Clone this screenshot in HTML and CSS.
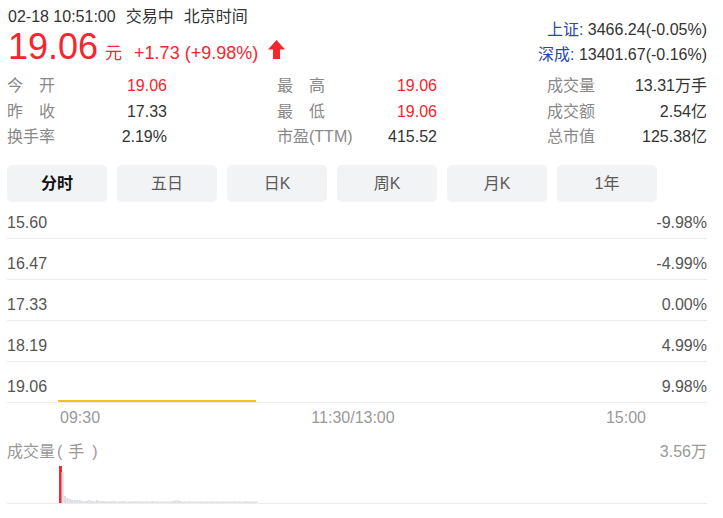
FILE: index.html
```html
<!DOCTYPE html>
<html lang="zh-CN">
<head>
    <meta charset="UTF-8">
    <title>行情</title>
    <link rel="stylesheet" href="styles.css">
</head>
<body>
    <div class="quote">
        <div class="top">
            <div class="main">
                <div class="time">02-18 10:51:00<span class="gap">交易中</span><span class="gap">北京时间</span></div>
                <div class="price-row">
                    <span class="price">19.06</span>
                    <span class="unit">元</span>
                    <span class="change">+1.73 (+9.98%)</span>
                    <svg class="arrow" width="17" height="19" viewBox="0 0 17 19">
                        <polygon points="8.5,0 17,9.5 12,9.5 12,19 5,19 5,9.5 0,9.5" fill="#f5262d"/>
                    </svg>
                </div>
            </div>
            <div class="index">
                <div><span class="index-name">上证:</span> 3466.24(-0.05%)</div>
                <div><span class="index-name">深成:</span> 13401.67(-0.16%)</div>
            </div>
        </div>

        <div class="stats">
            <div class="stat"><span class="label spread">今 开</span><span class="value up">19.06</span></div>
            <div class="stat"><span class="label spread">最 高</span><span class="value up">19.06</span></div>
            <div class="stat"><span class="label">成交量</span><span class="value">13.31万手</span></div>
            <div class="stat"><span class="label spread">昨 收</span><span class="value">17.33</span></div>
            <div class="stat"><span class="label spread">最 低</span><span class="value up">19.06</span></div>
            <div class="stat"><span class="label">成交额</span><span class="value">2.54亿</span></div>
            <div class="stat"><span class="label">换手率</span><span class="value">2.19%</span></div>
            <div class="stat"><span class="label">市盈(TTM)</span><span class="value">415.52</span></div>
            <div class="stat"><span class="label">总市值</span><span class="value">125.38亿</span></div>
        </div>

        <div class="tabs">
            <div class="tab active">分时</div>
            <div class="tab">五日</div>
            <div class="tab">日K</div>
            <div class="tab">周K</div>
            <div class="tab">月K</div>
            <div class="tab">1年</div>
        </div>

        <div class="chart">
            <div class="grid-row first"><span>15.60</span><span>-9.98%</span></div>
            <div class="grid-row"><span>16.47</span><span>-4.99%</span></div>
            <div class="grid-row"><span>17.33</span><span>0.00%</span></div>
            <div class="grid-row"><span>18.19</span><span>4.99%</span></div>
            <div class="grid-row"><span>19.06</span><span>9.98%</span></div>
            <div class="price-line"></div>
        </div>
        <div class="time-axis">
            <span>09:30</span>
            <span>11:30/13:00</span>
            <span>15:00</span>
        </div>

        <div class="vol-head">
            <span>成交量<span class="paren">(</span>手<span class="paren">)</span></span>
            <span>3.56万</span>
        </div>
        <div class="vol-chart">
            <svg id="vol" class="vol-bars" width="588" height="42" viewBox="0 0 588 42"></svg>
        </div>
    </div>

    <script>
        // volume per minute, in px (max 3.56万 = 37px)
        var vols = [37, 31, 7, 5, 4, 3, 3, 3, 3, 2, 2, 2, 3, 2, 2, 3, 2, 2, 2, 2,
            1.5, 2, 2, 1.5, 1.5, 2, 2, 1.5, 1.5, 1.5, 2, 1.5, 2, 1.5, 1.5, 1.5, 1.5, 1.5, 2, 1.5,
            1.5, 1.5, 1.5, 1.5, 1.5, 1.5, 2, 2.5, 2.5, 2, 1.5, 1.5, 1.5, 1.5, 1.5, 1.5, 1.5, 1.5, 1.5, 1.5,
            1.5, 1.5, 1.5, 1.5, 1.5, 1.5, 1.5, 1.5, 1.5, 1.5, 1.5, 1.5, 1.5, 1.5, 1.5, 1.5, 2, 1.5, 1.5, 1.5, 1.5];
        var svg = document.getElementById('vol');
        var html = '';
        for (var i = 0; i < vols.length; i++) {
            var x = 1 + i * 2.45;
            var w = i === 0 ? 3 : 2.2;
            var color = i === 0 ? '#f5262d' : '#dcdee4';
            html += '<rect x="' + x + '" y="' + (42 - vols[i]) + '" width="' + w + '" height="' + vols[i] + '" fill="' + color + '"/>';
        }
        svg.innerHTML = html;
    </script>
</body>
</html>
```

FILE: styles.css
```css
body {
    margin: 0;
    padding: 0;
    background-color: #fff;
    font-family: "Liberation Sans", Arial, "Noto Sans CJK SC", sans-serif;
    font-size: 16px;
    color: #333;
}

.quote {
    width: 700px;
    margin-left: 7px;
    padding-top: 8px;
}

.top {
    display: flex;
    justify-content: space-between;
}

.time {
    line-height: 18px;
    padding-left: 1px;
}

.time .gap {
    margin-left: 10px;
}

.price-row {
    display: flex;
    align-items: baseline;
    margin-top: 1px;
    height: 40px;
    line-height: 40px;
    color: #f5262d;
}

.price {
    font-size: 36px;
    padding-left: 1px;
}

.unit {
    font-size: 17px;
    margin-left: 7px;
}

.change {
    font-size: 18px;
    margin-left: 12px;
}

.arrow {
    margin-left: 10px;
    margin-bottom: -2px;
}

.index {
    margin-top: 9px;
    line-height: 25px;
    text-align: right;
}

.index-name {
    color: #2a48b3;
}

.stats {
    display: grid;
    grid-template-columns: repeat(3, 160px);
    justify-content: space-between;
    margin-top: 6px;
    line-height: 25.5px;
}

.stat {
    display: flex;
    justify-content: space-between;
}

.label {
    color: #888;
}

.label.spread {
    display: inline-block;
    width: 48px;
    text-align: justify;
    text-align-last: justify;
}

.value.up {
    color: #f5262d;
}

.tabs {
    display: flex;
    gap: 10px;
    margin-top: 15px;
}

.tab {
    width: 100px;
    height: 37px;
    line-height: 37px;
    text-align: center;
    background-color: #f2f3f5;
    border-radius: 5px;
    color: #5a5a5a;
}

.tab.active {
    color: #111;
    font-weight: bold;
}

.chart {
    position: relative;
}

.grid-row {
    display: flex;
    justify-content: space-between;
    align-items: flex-end;
    box-sizing: border-box;
    height: 41px;
    padding-bottom: 6px;
    line-height: 18px;
    border-bottom: 1px solid #ececec;
    color: #555;
}

.grid-row.first {
    height: 37px;
}

.price-line {
    position: absolute;
    left: 51px;
    bottom: 1px;
    width: 198px;
    height: 2px;
    background-color: #f7c21a;
}

.time-axis {
    display: flex;
    justify-content: space-between;
    width: 586px;
    margin-left: 53px;
    margin-top: 6px;
    line-height: 18px;
    color: #999;
}

.vol-head {
    display: flex;
    justify-content: space-between;
    margin-top: 16px;
    line-height: 18px;
    color: #999;
}

.paren {
    margin: 0 6px 0 2px;
}

.paren + .paren {
    margin: 0 0 0 8px;
}

.vol-chart {
    box-sizing: border-box;
    height: 43px;
    border-bottom: 1px solid #ececec;
}

.vol-bars {
    display: block;
    margin-left: 51px;
}
```
